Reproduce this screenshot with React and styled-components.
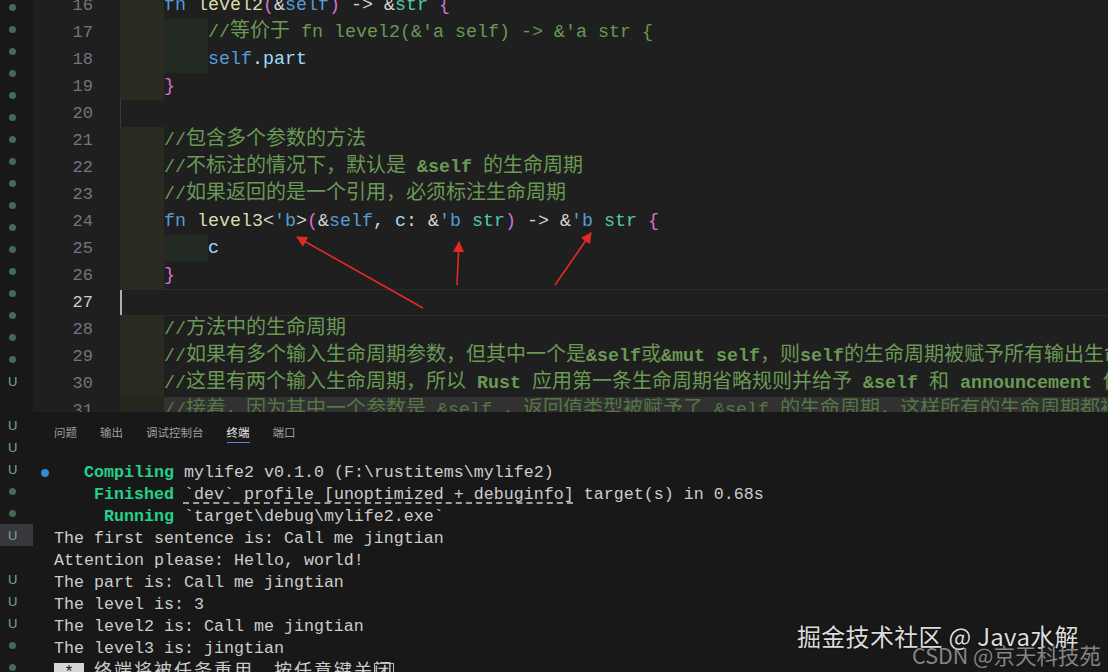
import styled, { createGlobalStyle } from "styled-components";

const GlobalStyle = createGlobalStyle`
  html, body {
    margin: 0;
    padding: 0;
    background: #1f1f1f;
  }
  #root {
    width: 1108px;
    height: 672px;
  }
`;

const K = "#569cd6";
const F = "#dcdcaa";
const P = "#d4d4d4";
const T = "#4ec9b0";
const B = "#da70d6";
const V = "#9cdcfe";
const C = "#6a9955";

const Frame = styled.div`
    position: relative;
    display: flex;
    width: 1108px;
    height: 672px;
    overflow: hidden;
    background: #1f1f1f;
`;

const Gutter = styled.div`
    width: 33px;
    flex-shrink: 0;
    background: #181818;
    overflow: hidden;
`;

const GutterList = styled.div`
    display: flex;
    flex-direction: column;
    margin-top: -4px;
`;

const GutterRow = styled.div`
    height: 22px;
    display: flex;
    align-items: center;
    padding-left: 8px;
    background: ${(p) => (p.$selected ? "#37373d" : "transparent")};
`;

const Dot = styled.span`
    width: 7px;
    height: 7px;
    margin-left: 1px;
    border-radius: 50%;
    background: #426b56;
`;

const ULetter = styled.span`
    font-family: "Liberation Sans", sans-serif;
    font-size: 13px;
    color: #80a48e;
`;

const Main = styled.div`
    flex: 1;
    min-width: 0;
    display: flex;
    flex-direction: column;
`;

const Editor = styled.div`
    height: 412px;
    flex-shrink: 0;
    overflow: hidden;
`;

const Lines = styled.div`
    margin-top: -8px;
`;

const Row = styled.div`
    display: flex;
    height: 27px;
`;

const LineNo = styled.div`
    width: 60px;
    flex-shrink: 0;
    text-align: right;
    font-family: "Liberation Mono", monospace;
    font-size: 17px;
    line-height: 27px;
    color: ${(p) => (p.$active ? "#cccccc" : "#6e7681")};
`;

const FoldGap = styled.div`
    width: 27px;
    flex-shrink: 0;
`;

const Code = styled.div`
    flex: 1;
    height: 27px;
    box-sizing: border-box;
    overflow: hidden;
    white-space: pre;
    font-family: "Liberation Mono", monospace;
    font-size: 18.33px;
    line-height: 27px;
    color: ${P};
    box-shadow: ${(p) =>
        p.$current
            ? "inset 0 1px 0 #2c2c2c, inset 0 -1px 0 #2c2c2c"
            : p.$guide
            ? "inset 1px 0 0 #3b3b3b"
            : "none"};
    background: ${(p) => (p.$dim ? "#383838" : "transparent")};
    opacity: ${(p) => (p.$dim ? 0.72 : 1)};
`;

const Indent = styled.span`
    display: inline-block;
    vertical-align: top;
    width: 44px;
    height: 27px;
    background: ${(p) => (p.$level === 2 ? "#232a24" : "#2a2a20")};
`;

const Caret = styled.span`
    display: inline-block;
    vertical-align: top;
    width: 2px;
    height: 25px;
    margin-top: 1px;
    background: #aeafad;
`;

const Tok = styled.span`
    color: ${(p) => p.$c};
    font-weight: ${(p) => (p.$b ? 700 : 400)};
`;

const Han = styled.span`
    font-family: "Noto Sans CJK SC", sans-serif;
    font-size: 20px;
    line-height: 1;
`;

const TermHan = styled.span`
    font-family: "Noto Sans CJK SC", sans-serif;
    font-size: 18px;
    line-height: 1;
    letter-spacing: 2px;
`;

const Terminal = styled.div`
    flex: 1;
    background: #181818;
    display: flex;
    flex-direction: column;
    overflow: hidden;
`;

const Tabs = styled.div`
    height: 50px;
    flex-shrink: 0;
    box-sizing: border-box;
    padding: 10px 0 0 21px;
    display: flex;
    gap: 23px;
    align-items: flex-start;
`;

const Tab = styled.span`
    font-family: "Noto Sans CJK SC", sans-serif;
    font-size: 11.5px;
    line-height: 20px;
    color: ${(p) => (p.$active ? "#e7e7e7" : "#9d9d9d")};
    box-shadow: ${(p) => (p.$active ? "0 1px 0 #4a8fd6" : "none")};
`;

const TermBody = styled.div`
    font-family: "Liberation Mono", monospace;
    font-size: 16.67px;
    line-height: 22px;
    color: #cccccc;
`;

const TermRow = styled.div`
    display: flex;
    height: 22px;
`;

const Deco = styled.div`
    width: 21px;
    flex-shrink: 0;
    display: flex;
    align-items: center;
    padding-left: 8px;
    box-sizing: border-box;
`;

const BlueDot = styled.span`
    width: 8px;
    height: 8px;
    border-radius: 50%;
    background: #2f8ad4;
`;

const TermText = styled.div`
    white-space: pre;
`;

const Green = styled.span`
    color: #23d18b;
    font-weight: 700;
`;

const Link = styled.span`
    text-decoration: underline dashed;
    text-underline-offset: 4px;
`;

const Inverse = styled.span`
    background: #d6d6d6;
    color: #181818;
`;

const CursorBox = styled.span`
    outline: 1px solid #bdbdbd;
    outline-offset: -1px;
`;

const Overlay = styled.svg`
    position: absolute;
    left: 0;
    top: 0;
    pointer-events: none;
`;

const Watermark = styled.div`
    position: absolute;
    left: 797px;
    top: 620px;
    font-family: "Noto Sans CJK SC", sans-serif;
    font-size: 24px;
    line-height: 32px;
    letter-spacing: 0.3px;
    color: #dcdcdc;
    text-shadow: 0 0 2px #000;
`;

const Watermark2 = styled.div`
    position: absolute;
    left: 912px;
    top: 641px;
    font-family: "Noto Sans CJK SC", sans-serif;
    font-size: 21.5px;
    line-height: 27px;
    color: rgba(170, 170, 170, 0.75);
`;

const HAN_RE = /([\u3000-\u303f\u4e00-\u9fff\uff00-\uffef]+)/;

function withHan(text, Wrap = Han) {
    return text
        .split(HAN_RE)
        .filter(Boolean)
        .map((part, i) =>
            HAN_RE.test(part) ? <Wrap key={i}>{part}</Wrap> : part
        );
}

const gutterRows = [
    ...Array(17).fill("dot"),
    "U",
    "",
    "U",
    "U",
    "U",
    "dot",
    "dot",
    "Usel",
    "",
    "U",
    "U",
    "U",
    "dot",
    "dot",
];

const lines = [
    {
        n: 16,
        indent: 1,
        guide: true,
        toks: [
            ["fn", K], [" ", P], ["level2", F], ["(", B], ["&", P], ["self", K],
            [")", B], [" -> ", P], ["&", P], ["str", T], [" ", P], ["{", B],
        ],
    },
    { n: 17, indent: 2, guide: true, toks: [["//等价于 fn level2(&'a self) -> &'a str {", C]] },
    { n: 18, indent: 2, guide: true, toks: [["self", K], [".", P], ["part", V]] },
    { n: 19, indent: 1, guide: true, toks: [["}", B]] },
    { n: 20, indent: 0, guide: true, toks: [] },
    { n: 21, indent: 1, guide: true, toks: [["//包含多个参数的方法", C]] },
    {
        n: 22,
        indent: 1,
        guide: true,
        toks: [["//不标注的情况下，默认是 ", C], ["&self", C, true], [" 的生命周期", C]],
    },
    { n: 23, indent: 1, guide: true, toks: [["//如果返回的是一个引用，必须标注生命周期", C]] },
    {
        n: 24,
        indent: 1,
        guide: true,
        toks: [
            ["fn", K], [" ", P], ["level3", F], ["<", P], ["'b", K], [">", P],
            ["(", B], ["&", P], ["self", K], [", ", P], ["c", V], [": ", P],
            ["&", P], ["'b", K], [" ", P], ["str", T], [")", B], [" -> ", P],
            ["&", P], ["'b", K], [" ", P], ["str", T], [" ", P], ["{", B],
        ],
    },
    { n: 25, indent: 2, guide: true, toks: [["c", V]] },
    { n: 26, indent: 1, guide: true, toks: [["}", B]] },
    { n: 27, indent: 0, current: true, toks: [] },
    { n: 28, indent: 1, toks: [["//方法中的生命周期", C]] },
    {
        n: 29,
        indent: 1,
        toks: [
            ["//如果有多个输入生命周期参数，但其中一个是", C], ["&self", C, true],
            ["或", C], ["&mut self", C, true], ["，则", C], ["self", C, true],
            ["的生命周期被赋予所有输出生命周期", C],
        ],
    },
    {
        n: 30,
        indent: 1,
        toks: [
            ["//这里有两个输入生命周期，所以 ", C], ["Rust", C, true],
            [" 应用第一条生命周期省略规则并给予 ", C], ["&self", C, true], [" 和 ", C],
            ["announcement", C, true], [" 他们各自的生命周期", C],
        ],
    },
    {
        n: 31,
        indent: 1,
        dim: true,
        toks: [["//接着，因为其中一个参数是 &self ，返回值类型被赋予了 &self 的生命周期，这样所有的生命周期都被计算出来了", C]],
    },
];

const outputLines = [
    "The first sentence is: Call me jingtian",
    "Attention please: Hello, world!",
    "The part is: Call me jingtian",
    "The level is: 3",
    "The level2 is: Call me jingtian",
    "The level3 is: jingtian",
];

function CodeLine({ line }) {
    return (
        <Row>
            <LineNo $active={line.current}>{line.n}</LineNo>
            <FoldGap />
            <Code $current={line.current} $guide={line.guide} $dim={line.dim}>
                {line.current && <Caret />}
                {line.indent >= 1 && <Indent $level={1} />}
                {line.indent >= 2 && <Indent $level={2} />}
                {line.toks.map(([text, color, bold], i) => (
                    <Tok key={i} $c={color} $b={bold}>
                        {withHan(text)}
                    </Tok>
                ))}
            </Code>
        </Row>
    );
}

function Arrows() {
    const red = "#e32b24";
    return (
        <Overlay width="1108" height="672" viewBox="0 0 1108 672">
            <defs>
                <marker
                    id="head"
                    viewBox="0 0 10 10"
                    refX="9"
                    refY="5"
                    markerWidth="11"
                    markerHeight="11"
                    markerUnits="userSpaceOnUse"
                    orient="auto"
                >
                    <path d="M0 0 L10 5 L0 10 Z" fill={red} />
                </marker>
            </defs>
            <line x1="423" y1="308" x2="297" y2="237" stroke={red} strokeWidth="1.6" markerEnd="url(#head)" />
            <line x1="457" y1="285" x2="459" y2="242" stroke={red} strokeWidth="1.6" markerEnd="url(#head)" />
            <line x1="555" y1="285" x2="591" y2="233" stroke={red} strokeWidth="1.6" markerEnd="url(#head)" />
        </Overlay>
    );
}

function App() {
    return (
        <>
            <GlobalStyle />
            <Frame>
                <Gutter>
                    <GutterList>
                        {gutterRows.map((kind, i) => (
                            <GutterRow key={i} $selected={kind === "Usel"}>
                                {kind === "dot" && <Dot />}
                                {kind.startsWith("U") && <ULetter>U</ULetter>}
                            </GutterRow>
                        ))}
                    </GutterList>
                </Gutter>
                <Main>
                    <Editor>
                        <Lines>
                            {lines.map((line) => (
                                <CodeLine key={line.n} line={line} />
                            ))}
                        </Lines>
                    </Editor>
                    <Terminal>
                        <Tabs>
                            <Tab>问题</Tab>
                            <Tab>输出</Tab>
                            <Tab>调试控制台</Tab>
                            <Tab $active>终端</Tab>
                            <Tab>端口</Tab>
                        </Tabs>
                        <TermBody>
                            <TermRow>
                                <Deco>
                                    <BlueDot />
                                </Deco>
                                <TermText>
                                    {"   "}
                                    <Green>Compiling</Green>
                                    {" mylife2 v0.1.0 (F:\\rustitems\\mylife2)"}
                                </TermText>
                            </TermRow>
                            <TermRow>
                                <Deco />
                                <TermText>
                                    {"    "}
                                    <Green>Finished</Green>{" "}
                                    <Link>`dev` profile [unoptimized + debuginfo]</Link>
                                    {" target(s) in 0.68s"}
                                </TermText>
                            </TermRow>
                            <TermRow>
                                <Deco />
                                <TermText>
                                    {"     "}
                                    <Green>Running</Green>
                                    {" `target\\debug\\mylife2.exe`"}
                                </TermText>
                            </TermRow>
                            {outputLines.map((text) => (
                                <TermRow key={text}>
                                    <Deco />
                                    <TermText>{text}</TermText>
                                </TermRow>
                            ))}
                            <TermRow>
                                <Deco />
                                <TermText>
                                    <Inverse> * </Inverse> {withHan("终端将被任务重用，按任意键关", TermHan)}
                                    <CursorBox>{withHan("闭", TermHan)}</CursorBox>
                                </TermText>
                            </TermRow>
                        </TermBody>
                    </Terminal>
                </Main>
                <Arrows />
                <Watermark>掘金技术社区 @ Java水解</Watermark>
                <Watermark2>CSDN @京天科技苑</Watermark2>
            </Frame>
        </>
    );
}

export default App;
